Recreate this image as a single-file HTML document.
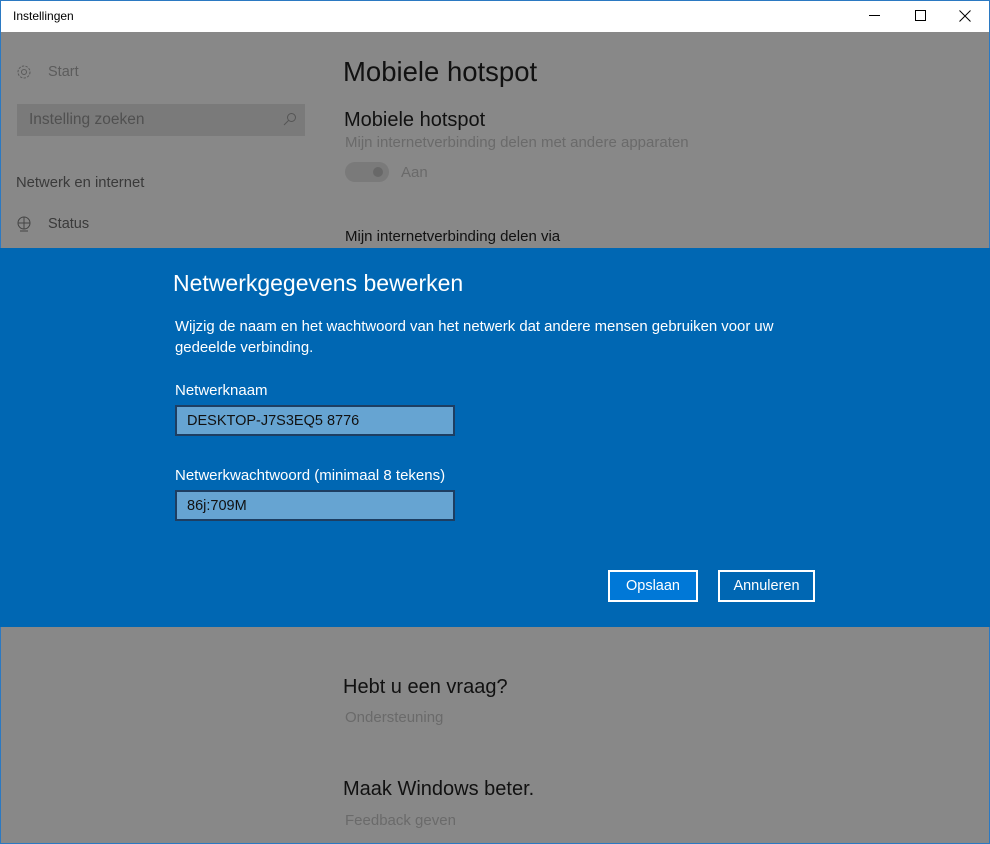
<!DOCTYPE html>
<html><head><meta charset="utf-8"><style>
*{margin:0;padding:0;box-sizing:border-box}
body{width:990px;height:844px;position:relative;overflow:hidden;background:#888;font-family:"Liberation Sans",sans-serif;}
.a{position:absolute;white-space:nowrap}
.title{left:0;top:0;width:990px;height:32px;background:#fff;border:1px solid #2b79c2;border-bottom:none}
.frame{left:0;top:32px;width:990px;height:812px;border:1px solid #2b79c2;border-top:none}
.dlg{left:0;top:248px;width:990px;height:379px;background:#0067b3}
.inp{background:#66a4d2;border:2px solid #1d3e62;height:31px;width:280px;font-size:14.5px;color:#111;padding:6px 10px}
.btn{border:2px solid #fff;color:#fff;font-size:14.5px;text-align:center;height:32px;line-height:28px}
</style></head><body>
<div class="a title"></div>
<div class="a" style="left:13px;top:9px;font-size:12px;color:#000">Instellingen</div>
<div class="a" style="left:869px;top:15px;width:11px;height:1px;background:#000"></div>
<div class="a" style="left:915px;top:10px;width:11px;height:11px;border:1px solid #000"></div>
<svg class="a" style="left:959px;top:10px" width="12" height="12"><path d="M0.5 0.5L11.5 11.5M11.5 0.5L0.5 11.5" stroke="#000" stroke-width="1"/></svg>
<div class="a frame"></div>

<svg class="a" style="left:16px;top:64px" width="16" height="16" viewBox="0 0 16 16"><circle cx="8" cy="8" r="2.5" fill="none" stroke="#5a5a5a"/><circle cx="8" cy="8" r="6" fill="none" stroke="#5a5a5a" stroke-dasharray="2.4 1.3"/></svg>
<div class="a" style="left:48px;top:64px;font-size:14.5px;color:#5c5c5c">Start</div>
<div class="a" style="left:17px;top:104px;width:288px;height:32px;background:#7a7a7a"></div>
<div class="a" style="left:29px;top:111px;font-size:15.5px;color:#505050">Instelling zoeken</div>
<svg class="a" style="left:283px;top:112px" width="14" height="14"><circle cx="8.5" cy="5.5" r="4" fill="none" stroke="#555"/><path d="M5.5 8.5L1 13" stroke="#555"/></svg>
<div class="a" style="left:16px;top:175px;font-size:14.8px;color:#3a3a3a">Netwerk en internet</div>
<svg class="a" style="left:16px;top:216px" width="16" height="16"><circle cx="8" cy="7" r="6" fill="none" stroke="#444"/><path d="M2 7H14M8 1V13M4 15H12" stroke="#444"/></svg>
<div class="a" style="left:48px;top:216px;font-size:14.5px;color:#3a3a3a">Status</div>

<div class="a" style="left:343px;top:56px;font-size:27.5px;color:#111">Mobiele hotspot</div>
<div class="a" style="left:344px;top:109px;font-size:20px;color:#111">Mobiele hotspot</div>
<div class="a" style="left:345px;top:134px;font-size:15px;color:#6a6a6a">Mijn internetverbinding delen met andere apparaten</div>
<div class="a" style="left:345px;top:162px;width:44px;height:20px;border-radius:10px;background:#7a7a7a"></div>
<div class="a" style="left:373px;top:167px;width:10px;height:10px;border-radius:5px;background:#686868"></div>
<div class="a" style="left:401px;top:164px;font-size:15px;color:#6a6a6a">Aan</div>
<div class="a" style="left:345px;top:228px;font-size:15px;color:#111">Mijn internetverbinding delen via</div>

<div class="a dlg"></div>
<div class="a" style="left:173px;top:270px;font-size:23px;color:#fff">Netwerkgegevens bewerken</div>
<div class="a" style="left:175px;top:317px;font-size:14.9px;line-height:21px;color:#fff">Wijzig de naam en het wachtwoord van het netwerk dat andere mensen gebruiken voor uw<br>gedeelde verbinding.</div>
<div class="a" style="left:175px;top:382px;font-size:15px;color:#fff">Netwerknaam</div>
<div class="a inp" style="left:175px;top:405px">DESKTOP-J7S3EQ5 8776</div>
<div class="a" style="left:175px;top:467px;font-size:15px;color:#fff">Netwerkwachtwoord (minimaal 8 tekens)</div>
<div class="a inp" style="left:175px;top:490px">86j:709M</div>
<div class="a btn" style="left:608px;top:570px;width:90px;background:#0078d7">Opslaan</div>
<div class="a btn" style="left:718px;top:570px;width:97px">Annuleren</div>

<div class="a" style="left:343px;top:676px;font-size:20px;color:#111">Hebt u een vraag?</div>
<div class="a" style="left:345px;top:709px;font-size:15px;color:#6a6a6a">Ondersteuning</div>
<div class="a" style="left:343px;top:778px;font-size:20px;color:#111">Maak Windows beter.</div>
<div class="a" style="left:345px;top:812px;font-size:15px;color:#6a6a6a">Feedback geven</div>
</body></html>
